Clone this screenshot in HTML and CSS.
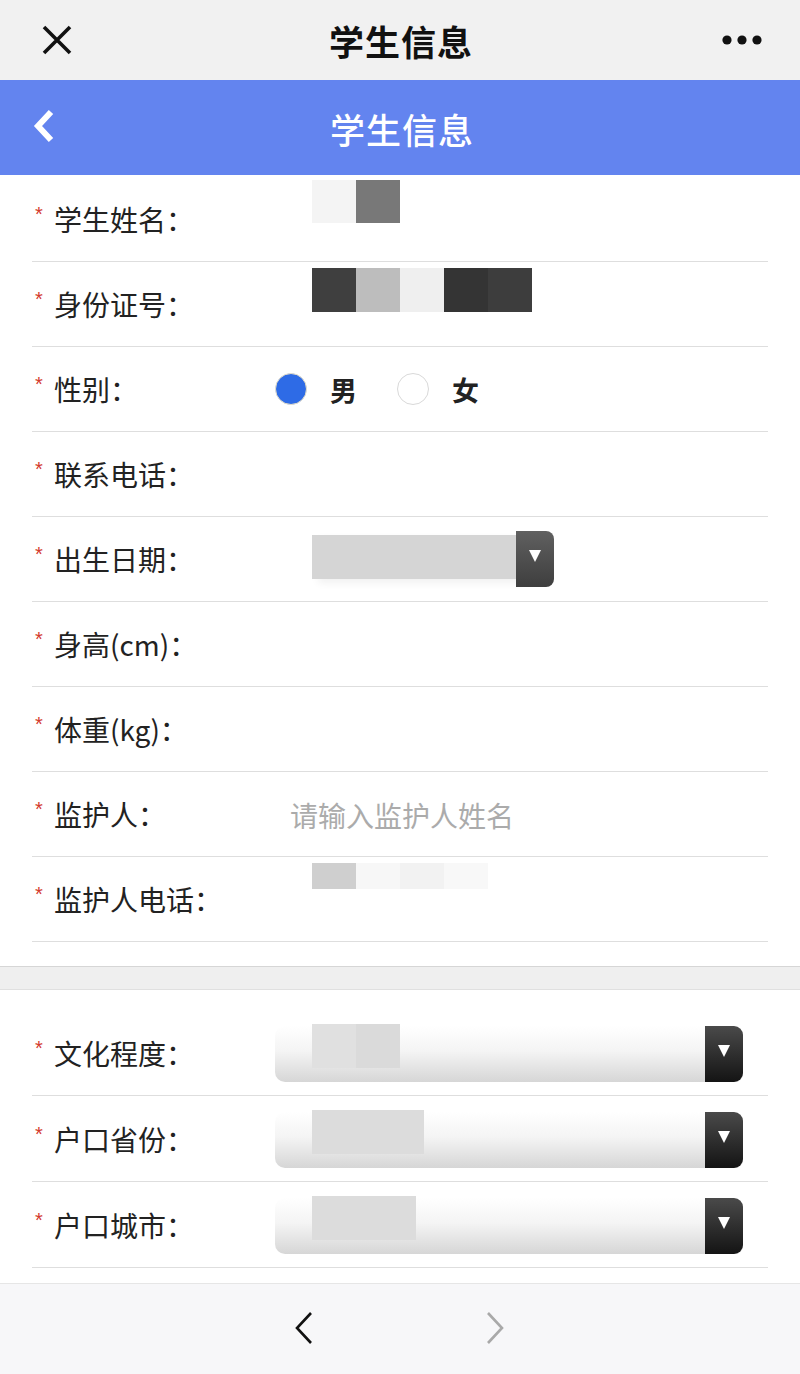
FILE: index.html
```html
<!DOCTYPE html>
<html lang="zh-CN">
<head>
<meta charset="utf-8">
<title>学生信息</title>
<link rel="stylesheet" href="styles.css">
</head>
<body>
<div class="page">
  <header class="topbar">
    <svg class="close" width="32" height="32" viewBox="0 0 32 32"><path d="M3 3 L29 29 M29 3 L3 29" stroke="#111" stroke-width="3.6" stroke-linecap="butt"/></svg>
    <div class="top-title">学生信息</div>
    <svg class="more" width="44" height="12" viewBox="0 0 44 12"><circle cx="6" cy="6" r="4.6" fill="#111"/><circle cx="21" cy="6" r="4.6" fill="#111"/><circle cx="36" cy="6" r="4.6" fill="#111"/></svg>
  </header>
  <div class="appbar">
    <svg class="back" width="24" height="34" viewBox="0 0 24 34"><path d="M19 3 L6 17 L19 31" fill="none" stroke="#fff" stroke-width="6" stroke-linejoin="miter"/></svg>
    <div class="app-title">学生信息</div>
  </div>
  <main class="content">
    <section class="group first">
      <div class="row">
        <span class="req">*</span><span class="lab">学生姓名：</span>
        <div class="pix pix-name"><i class="c1"></i><i class="c2"></i></div>
      </div>
      <div class="row">
        <span class="req">*</span><span class="lab">身份证号：</span>
        <div class="pix pix-id"><i class="d1"></i><i class="d2"></i><i class="d3"></i><i class="d4"></i><i class="d5"></i></div>
      </div>
      <div class="row">
        <span class="req">*</span><span class="lab">性别：</span>
        <div class="radios">
          <span class="radio on"></span><span class="rtxt">男</span>
          <span class="radio"></span><span class="rtxt">女</span>
        </div>
      </div>
      <div class="row">
        <span class="req">*</span><span class="lab">联系电话：</span>
      </div>
      <div class="row">
        <span class="req">*</span><span class="lab">出生日期：</span>
        <div class="date">
          <div class="date-fill"></div>
          <div class="date-btn"><span class="tri"></span></div>
        </div>
      </div>
      <div class="row">
        <span class="req">*</span><span class="lab">身高(cm)：</span>
      </div>
      <div class="row">
        <span class="req">*</span><span class="lab">体重(kg)：</span>
      </div>
      <div class="row">
        <span class="req">*</span><span class="lab">监护人：</span>
        <span class="ph">请输入监护人姓名</span>
      </div>
      <div class="row">
        <span class="req">*</span><span class="lab">监护人电话：</span>
        <div class="pix pix-gp"><i class="g1"></i><i class="g2"></i><i class="g3"></i><i class="g4"></i></div>
      </div>
    </section>
    <div class="band"></div>
    <section class="group second">
      <div class="row">
        <span class="req">*</span><span class="lab">文化程度：</span>
        <div class="sel"><div class="sel-blk b1"></div><div class="sel-btn"><span class="tri"></span></div></div>
      </div>
      <div class="row">
        <span class="req">*</span><span class="lab">户口省份：</span>
        <div class="sel"><div class="sel-blk b2"></div><div class="sel-btn"><span class="tri"></span></div></div>
      </div>
      <div class="row">
        <span class="req">*</span><span class="lab">户口城市：</span>
        <div class="sel"><div class="sel-blk b3"></div><div class="sel-btn"><span class="tri"></span></div></div>
      </div>
      <div class="row">
        <span class="lab-spacer"></span>
        <div class="sel plain"><div class="sel-btn"><span class="tri"></span></div></div>
      </div>
    </section>
  </main>
  <footer class="bottombar">
    <svg class="nav prev" width="20" height="34" viewBox="0 0 20 34"><path d="M17 2 L3 17 L17 32" fill="none" stroke="#111" stroke-width="2.6"/></svg>
    <svg class="nav next" width="20" height="34" viewBox="0 0 20 34"><path d="M3 2 L17 17 L3 32" fill="none" stroke="#a9a9a9" stroke-width="2.6"/></svg>
  </footer>
</div>
</body>
</html>
```
FILE: styles.css
```css
* { box-sizing: border-box; }
html, body { margin: 0; padding: 0; }
body {
  width: 800px;
  height: 1374px;
  overflow: hidden;
  background: #fff;
  font-family: "Noto Sans CJK SC", "Noto Sans", sans-serif;
  color: #222;
}
.page {
  height: 1374px;
  display: flex;
  flex-direction: column;
}
.topbar {
  height: 80px;
  flex: none;
  background: #f1f1f1;
  display: flex;
  align-items: center;
  padding: 0 35px 0 41px;
}
.close { display: block; }
.top-title {
  flex: 1;
  text-align: center;
  font-size: 35px;
  font-weight: 700;
  color: #111;
  letter-spacing: 1px;
  margin-left: 8px;
}
.more { display: block; }
.appbar {
  height: 95px;
  flex: none;
  background: #6384ef;
  display: flex;
  align-items: center;
  padding: 0 0 0 32px;
}
.back { display: block; margin-top: -4px; }
.app-title {
  flex: 1;
  text-align: center;
  font-size: 35px;
  font-weight: 500;
  color: #fff;
  letter-spacing: 1px;
  margin-right: 52px;
  margin-top: 2px;
}
.content {
  flex: 1;
  overflow: hidden;
}
.group.first { padding-top: 2px; padding-bottom: 24px; }
.group.second { padding-top: 20px; }
.row {
  margin: 0 32px;
  height: 85px;
  border-bottom: 1px solid #dedede;
  display: flex;
  align-items: center;
  padding-left: 3px;
}
.group.second .row { height: 86px; }
.req {
  width: 19px;
  color: #d3392d;
  font-size: 20px;
  line-height: 1;
  margin-top: -10px;
  font-family: "Liberation Sans", sans-serif;
}
.lab {
  width: 221px;
  font-size: 28px;
  color: #222;
  white-space: nowrap;
}
.lab-spacer { width: 240px; }
.pix {
  display: flex;
  margin-left: 37px;
  align-self: flex-start;
}
.pix i { display: block; width: 44px; }
.pix-name { margin-top: 3px; }
.pix-name i { height: 43px; }
.c1 { background: #f4f4f4; }
.c2 { background: #787878; }
.pix-id { margin-top: 6px; }
.pix-id i { height: 44px; }
.d1 { background: #3f3f3f; }
.d2 { background: #bdbdbd; }
.d3 { background: #efefef; }
.d4 { background: #343434; }
.d5 { background: #3d3d3d; }
.pix-gp { margin-top: 6px; }
.pix-gp i { height: 26px; }
.g1 { background: #cfcfcf; }
.g2 { background: #f7f7f7; }
.g3 { background: #f2f2f2; }
.g4 { background: #f8f8f8; }
.radios {
  display: flex;
  align-items: center;
}
.radio {
  width: 32px;
  height: 32px;
  border-radius: 50%;
  border: 1.5px solid #d9d9d9;
  background: #fff;
  display: block;
}
.radio.on {
  background: #2e6be6;
  border: 1.5px solid #e6dfc9;
}
.rtxt {
  font-size: 27px;
  font-weight: 700;
  color: #222;
  margin-left: 23px;
  margin-right: 40px;
}
.date {
  display: flex;
  align-items: center;
  margin-left: 37px;
  height: 56px;
}
.date-fill {
  width: 204px;
  height: 44px;
  background: #d5d5d5;
  margin-top: -4px;
  box-shadow: 6px 4px 8px rgba(0,0,0,0.06);
}
.date-btn {
  width: 38px;
  height: 56px;
  background: linear-gradient(#606060, #3e3e3e);
  border-radius: 0 8px 8px 0;
  display: flex;
  align-items: center;
  justify-content: center;
}
.tri {
  display: block;
  width: 0;
  height: 0;
  border-left: 6.5px solid transparent;
  border-right: 6.5px solid transparent;
  border-top: 12px solid #fff;
  margin-top: -6px;
}
.ph {
  font-size: 28px;
  color: #ababab;
  margin-left: 15px;
  margin-top: 2px;
}
.band {
  height: 24px;
  background: #efefef;
  border-top: 1px solid #d6d6d6;
  border-bottom: 1px solid #e0e0e0;
}
.sel {
  width: 468px;
  height: 56px;
  border-radius: 10px 8px 8px 10px;
  background: linear-gradient(#ffffff 0%, #f4f4f4 45%, #d6d6d6 100%);
  display: flex;
  align-items: flex-start;
  margin-top: 2px;
}
.sel.plain { background: none; }
.sel-blk {
  margin-left: 37px;
  height: 44px;
  margin-top: -2px;
  background: #dcdcdc;
}
.sel-blk.b1 { width: 88px; background: linear-gradient(90deg, #e0e0e0 0 50%, #dadada 50% 100%); }
.sel-blk.b2 { width: 112px; }
.sel-blk.b3 { width: 104px; }
.sel-btn {
  margin-left: auto;
  width: 38px;
  height: 56px;
  background: linear-gradient(#4a4a4a, #141414);
  border-radius: 0 9px 9px 0;
  display: flex;
  align-items: center;
  justify-content: center;
}
.bottombar {
  height: 91px;
  flex: none;
  background: #f7f7f9;
  border-top: 1px solid #e6e6e6;
  display: flex;
  align-items: center;
  justify-content: center;
  gap: 171px;
  padding-right: 2px;
}
.nav { display: block; margin-top: -2px; }
```
